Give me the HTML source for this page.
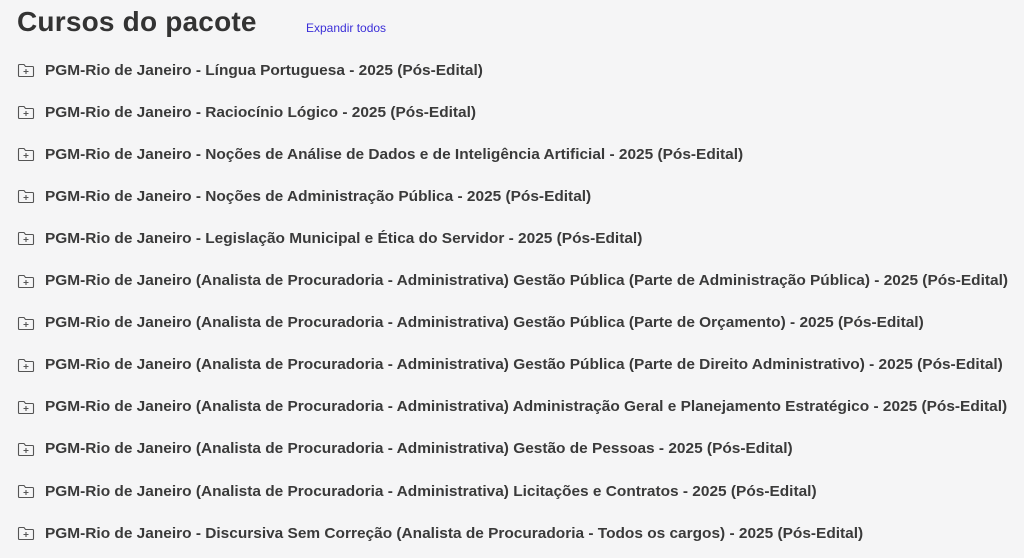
<!DOCTYPE html>
<html><head><meta charset="utf-8"><style>
html,body{margin:0;padding:0;background:#f5f5f6;width:1024px;height:558px;overflow:hidden}
body{font-family:"Liberation Sans",sans-serif;color:#3a3a3a}
h1{position:absolute;left:17px;top:6px;margin:0;font-size:28px;font-weight:bold;color:#333;letter-spacing:0.2px}
.exp{position:absolute;left:306px;top:21px;font-size:12px;color:#3b2fd8}
.it{position:absolute;left:17px;height:20px;display:flex;align-items:center;white-space:nowrap}
.it svg{margin-right:10px}
.it span{font-size:15px;font-weight:bold;display:inline-block;transform-origin:left center}
</style></head><body>
<h1>Cursos do pacote</h1>
<div class="exp">Expandir todos</div>
<div id="list"></div>
<script>
var t=["PGM-Rio de Janeiro - Língua Portuguesa - 2025 (Pós-Edital)",
"PGM-Rio de Janeiro - Raciocínio Lógico - 2025 (Pós-Edital)",
"PGM-Rio de Janeiro - Noções de Análise de Dados e de Inteligência Artificial - 2025 (Pós-Edital)",
"PGM-Rio de Janeiro - Noções de Administração Pública - 2025 (Pós-Edital)",
"PGM-Rio de Janeiro - Legislação Municipal e Ética do Servidor - 2025 (Pós-Edital)",
"PGM-Rio de Janeiro (Analista de Procuradoria - Administrativa) Gestão Pública (Parte de Administração Pública) - 2025 (Pós-Edital)",
"PGM-Rio de Janeiro (Analista de Procuradoria - Administrativa) Gestão Pública (Parte de Orçamento) - 2025 (Pós-Edital)",
"PGM-Rio de Janeiro (Analista de Procuradoria - Administrativa) Gestão Pública (Parte de Direito Administrativo) - 2025 (Pós-Edital)",
"PGM-Rio de Janeiro (Analista de Procuradoria - Administrativa) Administração Geral e Planejamento Estratégico - 2025 (Pós-Edital)",
"PGM-Rio de Janeiro (Analista de Procuradoria - Administrativa) Gestão de Pessoas - 2025 (Pós-Edital)",
"PGM-Rio de Janeiro (Analista de Procuradoria - Administrativa) Licitações e Contratos - 2025 (Pós-Edital)",
"PGM-Rio de Janeiro - Discursiva Sem Correção (Analista de Procuradoria - Todos os cargos) - 2025 (Pós-Edital)"];
var ic='<svg width="18" height="16" viewBox="0 0 18 16"><path d="M1.5 3.5v10a1 1 0 0 0 1 1h13a1 1 0 0 0 1-1v-8a1 1 0 0 0-1-1H8.5L7 2.5H2.5a1 1 0 0 0-1 1z" fill="none" stroke="#555" stroke-width="1.1"/><path d="M9 7v5M6.5 9.5h5" stroke="#555" stroke-width="1.1"/></svg>';
var h='';t.forEach(function(s,i){h+='<div class="it" style="top:'+(60+i*42.1)+'px">'+ic+'<span>'+s+'</span></div>';});
document.getElementById('list').innerHTML=h;
var sp=document.querySelectorAll('.it span');var w=sp[5].getBoundingClientRect().width;var k=963/w;
sp.forEach(function(e){e.style.transform='scaleX('+k+')';});
</script>
</body></html>
